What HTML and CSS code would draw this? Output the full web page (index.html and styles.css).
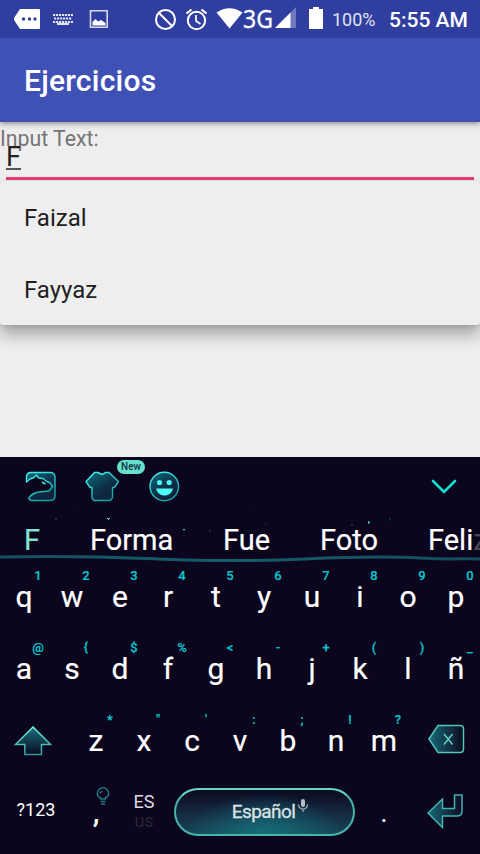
FILE: index.html
```html
<!DOCTYPE html>
<html lang="es">
<head>
<meta charset="utf-8">
<title>Ejercicios</title>
<link rel="stylesheet" href="styles.css">
</head>
<body>
<header class="status">
  <svg class="notifications" width="120" height="38" viewBox="0 0 120 38">
    <path fill="#fff" d="M20 9H39q1 0 1 1V28q0 1-1 1H20L14 20V18Z"/>
    <g fill="#303f9f"><circle cx="23.500" cy="19" r="1.700"/><circle cx="29.500" cy="19" r="1.700"/><circle cx="35" cy="19" r="1.700"/></g>
    <g stroke="#dfe1f1" stroke-width="2"><path stroke-dasharray="2.200 .8" d="M53 15H73M53 22H73"/><path stroke-dasharray="2.200 .8" d="M54 18.500H72"/><path d="M57 24H69"/></g>
    <path fill="none" stroke="#d6d9ed" stroke-width="1.600" d="M90.500 10.800H107.200V27.200H90.500Z"/>
    <path fill="#fff" d="M92.500 25.500V22L95.500 19L98 21.500L101 20L105.500 23V25.500Z"/>
  </svg>
  <svg class="indicators" width="90" height="38" viewBox="0 0 90 38" fill="none" stroke="#fff" stroke-width="2">
    <circle cx="12.500" cy="19.500" r="9.500"/><path d="M6 13L19 26"/>
    <circle cx="43.500" cy="20.500" r="8.700"/><path stroke-width="1.700" d="M43 15V21L47.500 24"/><path stroke-width="2.200" d="M33.500 13.500L38.500 9.500M48.500 9.500L53.500 13.500"/>
    <path fill="#fff" stroke="none" d="M63.500 12.500Q76.500 4 89.500 12.500L76.500 28.500Z"/>
  </svg>
  <span class="network">3G</span>
  <svg class="signal" width="52" height="38" viewBox="0 0 52 38"><path fill="#7179bc" d="M3 28H24V7Z"/><path fill="#fff" d="M3 28H18.500V12.500ZM37 9H41V7H47V9H51V29H37Z"/></svg>
  <span class="percent">100%</span>
  <span class="clock">5:55 AM</span>
</header>
<div class="appbar"><h1>Ejercicios</h1></div>
<main>
  <label class="label">Input Text:</label>
  <div class="field"><span class="typed">F</span></div>
  <ul class="dropdown"><li>Faizal</li><li>Fayyaz</li></ul>
</main>
<section class="keyboard">
  <svg class="decor" width="480" height="397" viewBox="0 0 480 397">
    <defs><linearGradient id="wave"><stop offset="0" stop-color="#125263"/><stop offset=".5" stop-color="#155b68"/><stop offset="1" stop-color="#124d5d"/></linearGradient></defs>
    <path d="M0 100C100 98 145 102 185 103S260 104 305 102S380 99 420 101S460 101 480 102" fill="none" stroke="url(#wave)" stroke-width="3"/>
    <g fill="#164a58"><path d="M55 61h2v2h-2zM183 72h2v2h-2zM209 73h2v2h-2zM389 61h2v2h-2zM390 69h1v1h-1zM351 67h2v2h-2zM265 66h1v2h-1zM76 49h1v1h-1zM255 52h1v1h-1z" opacity=".6"/></g>
    <path fill="#50bdb8" d="M107 61h3v1h-1v1h-1v-1h-1zM183 72h2v1h-2zM368 64h1v1h1v1h-1v1h-1z"/>
  </svg>
  <div class="toolbar">
    <svg width="480" height="60" viewBox="0 0 480 60">
      <defs>
        <linearGradient id="tool" x1="0" y1="0" x2=".7" y2="1"><stop stop-color="#0d6e7c"/><stop offset=".65" stop-color="#0d2c44"/><stop offset="1" stop-color="#102239"/></linearGradient>
        <linearGradient id="edge" x1="0" y1="0" x2=".6" y2="1"><stop stop-color="#4cf8f4"/><stop offset="1" stop-color="#12a1a7"/></linearGradient>
      </defs>
      <g fill="url(#tool)" stroke="url(#edge)" stroke-width="1.400" stroke-linejoin="round">
        <path d="M26.500 25V20Q26.500 15.500 31 15.500H50Q55 15.500 55 20.500V39Q55 43.500 50 43.500H31L28.500 41.500Q32 35 43 34.500L49 34L52.500 29.500L50 26L46 24L43 21.500L38.500 21L36.500 18L34 20.500L30 22Z"/>
        <path d="M98 15.500L102 17.500L106 15.500H109L118.500 24.500L114.500 30.500H112.500V41L110 43.500H94L92 41V30.500H90L86 24.500L94.500 15.500Z"/>
        <circle cx="164.300" cy="29.500" r="14.300"/>
      </g>
      <path d="M42 25L45.500 27" stroke="#42ebea" stroke-width="1.500"/>
      <g fill="#4ffafa"><circle cx="159.500" cy="25.500" r="2.600"/><circle cx="169.200" cy="25.500" r="2.600"/><path d="M156 31.500H173C172 36 168.500 38.500 164.500 38.500S157 36 156 31.500Z"/></g>
      <path d="M433 24L444 35L455 24" fill="none" stroke="#12e3d2" stroke-width="2.600" stroke-linecap="round"/>
    </svg>
    <span class="new">New</span>
  </div>
  <div class="suggestions"><span class="s1">F</span><span class="s2">Forma</span><span class="s3">Fue</span><span class="s4">Foto</span><span class="s5">Feli<i>z</i></span></div>
  <div class="row">
    <span>q<b>1</b></span><span>w<b>2</b></span><span>e<b>3</b></span><span>r<b>4</b></span><span>t<b>5</b></span><span>y<b>6</b></span><span>u<b>7</b></span><span>i<b>8</b></span><span>o<b>9</b></span><span>p<b>0</b></span>
  </div>
  <div class="row">
    <span>a<b>@</b></span><span>s<b>{</b></span><span>d<b>$</b></span><span>f<b>%</b></span><span>g<b>&lt;</b></span><span>h<b>-</b></span><span>j<b>+</b></span><span>k<b>(</b></span><span>l<b>)</b></span><span>ñ<b>_</b></span>
  </div>
  <div class="row row-shift">
    <svg width="72" height="72" viewBox="0 0 72 72"><defs><linearGradient id="shift" x2="0" y2="1"><stop stop-color="#19707b"/><stop offset="1" stop-color="#0c0a20"/></linearGradient><linearGradient id="line" x2="0" y2="1"><stop stop-color="#6ff7e1"/><stop offset="1" stop-color="#349a99"/></linearGradient></defs><path d="M33 22L50.500 39.500H41.500V49.500H24.800V39.500H15.500Z" fill="url(#shift)" stroke="url(#line)" stroke-width="1.500"/></svg>
    <span>z<b>*</b></span><span>x<b>"</b></span><span>c<b>'</b></span><span>v<b>:</b></span><span>b<b>;</b></span><span>n<b>!</b></span><span>m<b>?</b></span>
    <svg width="72" height="72" viewBox="0 0 72 72"><defs><linearGradient id="key"><stop stop-color="#176975"/><stop offset="1" stop-color="#0c0a20"/></linearGradient></defs><path d="M21 34L30 20.500H52Q55.500 20.500 55.500 24V44Q55.500 47.500 52 47.500H30Z" fill="url(#key)" stroke="#4fc7ba" stroke-width="1.500"/><path d="M36 29L44.500 39.500M44.500 29L36 39.500" stroke="#65d0c4" stroke-width="1.500"/></svg>
  </div>
  <div class="row row-bottom">
    <span class="symbols">?123</span>
    <span class="comma">,<svg width="16" height="20" viewBox="0 0 16 20" fill="none" stroke="#277681" stroke-width="1.500"><path d="M5.500 12V10.800Q2.300 9.500 2.300 6.500A5.700 5.700 0 0 1 13.700 6.500Q13.700 9.500 10.500 10.800V12ZM5.200 6.500Q5.500 4.500 7.500 4.500M5.500 14.500H10.500M6 17H10"/></svg></span>
    <span class="lang"><em>ES</em><small>us</small></span>
    <span class="space"><em>Español</em><svg width="12" height="16" viewBox="0 0 12 16"><path fill="#b6bdc5" d="M4 3Q4 1 6 1T8 3V7Q8 9 6 9T4 7Z"/><path d="M1.500 6.500Q2 11 6 11T10.500 6.500M6 11V14" fill="none" stroke="#aab2bb" stroke-width="1.200"/></svg></span>
    <span class="period">.</span>
    <svg width="72" height="72" viewBox="0 0 72 72"><path d="M20 36L34.500 22V31.500H46.500V18H54V34Q54 39 49 39H34.500V50.500Z" fill="url(#key)" stroke="#45b3ad" stroke-width="1.500"/></svg>
  </div>
</section>
</body>
</html>
```
FILE: styles.css
```css
* { box-sizing: border-box; }
body { margin: 0; width: 480px; height: 854px; overflow: hidden; background: #eee; font-family: Roboto, sans-serif; color: #212121; }
svg { display: block; flex: none; }
.status { position: relative; z-index: 1; height: 38px; display: flex; background: #303f9f; color: #fff; line-height: 38px; white-space: nowrap; }
.indicators { margin-left: 33px; }
.network { width: 32px; font: 25px/36px "Noto Sans", sans-serif; transform: scaleX(.92); transform-origin: left; -webkit-text-stroke: .3px #fff; }
.signal { margin-left: -3px; }
.percent { width: 65px; padding-left: 8px; font-size: 18px; line-height: 40px; color: #e1e3f2; }
.clock { font-size: 21px; font-weight: 500; line-height: 40px; }
.network, .percent, .clock { flex: none; }
.appbar { position: relative; height: 84px; padding-left: 24px; background: #3f51b5; box-shadow: 0 1px 6px rgba(0,0,0,.5); }
h1 { margin: 0; color: #fff; font-size: 30px; font-weight: 500; letter-spacing: .25px; line-height: 86px; }
main { height: 335px; padding-top: 4px; }
.label { display: block; height: 24px; font-size: 21.300px; line-height: 25px; color: #757575; }
.field { height: 30px; margin: 0 6px; border-bottom: 3px solid #e93b77; font-size: 27px; line-height: 15px; }
.typed { display: block; width: 15px; height: 20px; border-bottom: 2px solid #555; line-height: 14px; }
.dropdown { position: relative; margin: 1px 0 0; padding: 0; list-style: none; background: #eee; border-radius: 3px; box-shadow: 0 10px 16px rgba(0,0,0,.3), 0 1px 5px rgba(0,0,0,.13); }
.dropdown li { height: 72px; padding-left: 24px; font-size: 24px; line-height: 74px; }
.keyboard { position: relative; height: 397px; background: #0b051d; color: #fff; overflow: hidden; }
.decor { position: absolute; inset: 0; }
.toolbar { position: relative; height: 60px; }
.new { position: absolute; left: 117px; top: 3px; width: 28px; height: 14px; border-radius: 7px; background: #64e0cf; color: #12323e; font-size: 10px; font-weight: 500; line-height: 14px; text-align: center; }
.suggestions { position: relative; display: flex; height: 44px; padding-left: 24px; font-size: 29px; line-height: 46px; white-space: nowrap; -webkit-text-stroke: .2px; }
.suggestions span { flex: none; }
.s1 { width: 66px; color: #80e4d3; }
.s2 { width: 133px; }
.s3 { width: 97px; }
.s4 { width: 108px; }
.s5 i { font-style: normal; color: #494553; }
.row { position: relative; display: grid; grid-template-columns: repeat(10, 48px); height: 72px; font-size: 30px; line-height: 72px; text-align: center; -webkit-text-stroke: .2px; }
.row > span { position: relative; }
.row b { position: absolute; left: 28px; top: 7px; width: 20px; font-size: 13px; font-weight: 500; line-height: 16px; color: #08c5cc; }
.row-shift { grid-template-columns: 72px repeat(7, 48px) 72px; }
.row-bottom { grid-template-columns: 72px 48px 48px 192px 48px 72px; -webkit-text-stroke: 0; }
.row-bottom .symbols { font-size: 18px; line-height: 66px; }
.comma { line-height: 70px; font-weight: 500; }
.comma svg { position: absolute; left: 23px; top: 10px; }
.lang { font-size: 18px; }
.lang em, .lang small { display: block; height: 20px; line-height: 20px; font-size: 18px; font-style: normal; }
.lang em { margin-top: 15px; color: #dddce0; }
.lang small { height: 18px; line-height: 17px; color: #282435; }
.row-bottom .space { display: flex; justify-content: center; align-items: center; width: 181px; height: 48px; margin: 11px 0 0 6px; border: 2px solid #48b5aa; border-top-color: #63d7c6; border-radius: 24px; background: radial-gradient(ellipse at 50% 110%, #16717c 0, rgba(22,113,124,0) 65%), linear-gradient(#0b0920, #152b41 55%, #164558); font-size: 19px; line-height: 44px; color: #dce2e6; }
.space em { font-style: normal; letter-spacing: -.6px; -webkit-text-stroke: .3px; }
.space svg { margin: -13px -12px 0 2px; }
.period { line-height: 72px; font-size: 28px; }
```
